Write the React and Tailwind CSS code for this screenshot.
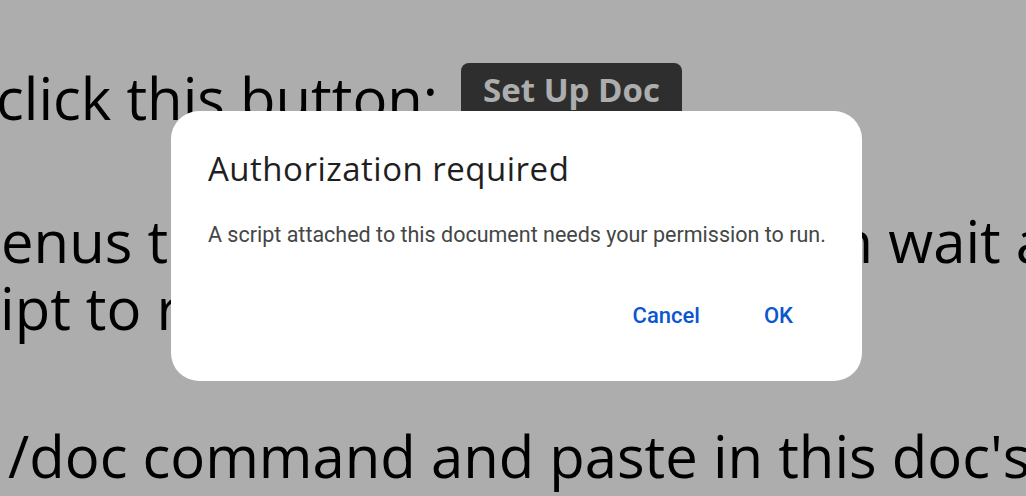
export default function App() {
  return (
    <div className="relative h-[496px] w-[1026px] overflow-hidden bg-white text-black font-['Open_Sans','DejaVu_Sans',sans-serif]">
      {/* page behind the dialog */}
      <div className="flex flex-col pt-[64px] text-[58px] leading-[67px]">
        <div className="flex items-center whitespace-nowrap -ml-[4px]">
          <span>click this button:</span>
          <span className="ml-[23px] -mt-[9px] rounded-[8px] bg-[#444444] px-[22px] pb-[8px] pt-[1px] text-[33px] font-bold leading-[52px] text-white">
            Set Up Doc
          </span>
        </div>
        <div className="mt-[76px] flex justify-between whitespace-nowrap">
          <span className="ml-[1px]">enus to</span>
          <span className="-mr-[22px]">n wait a</span>
        </div>
        <div className="whitespace-nowrap">ipt to run</div>
        <div className="mt-[81px] whitespace-nowrap pl-[8px]">/doc command and paste in this doc's</div>
      </div>

      {/* overlay */}
      <div className="absolute inset-0 bg-black/[0.32]" />

      {/* dialog */}
      <div className="absolute left-[171px] top-[111px] flex h-[270px] w-[691px] flex-col rounded-[28px] bg-white pl-[37px] pr-[36px] pt-[38px] font-['Roboto','Liberation_Sans',sans-serif]">
        <h2 className="font-['Open_Sans','Roboto',sans-serif] text-[33px] leading-[40px] tracking-[0.5px] text-[#1f1f1f]">Authorization required</h2>
        <p className="mt-[32px] text-[21.5px] leading-[28px] text-[#444746]">
          A script attached to this document needs your permission to run.
        </p>
        <div className="mt-auto mb-[45px] flex justify-end gap-[16px] pr-[9px]">
          <button className="px-[24px] py-[8px] text-[22px] font-medium leading-[24px] text-[#0b57d0]">Cancel</button>
          <button className="px-[24px] py-[8px] text-[22px] font-medium leading-[24px] text-[#0b57d0]">OK</button>
        </div>
      </div>
    </div>
  )
}
